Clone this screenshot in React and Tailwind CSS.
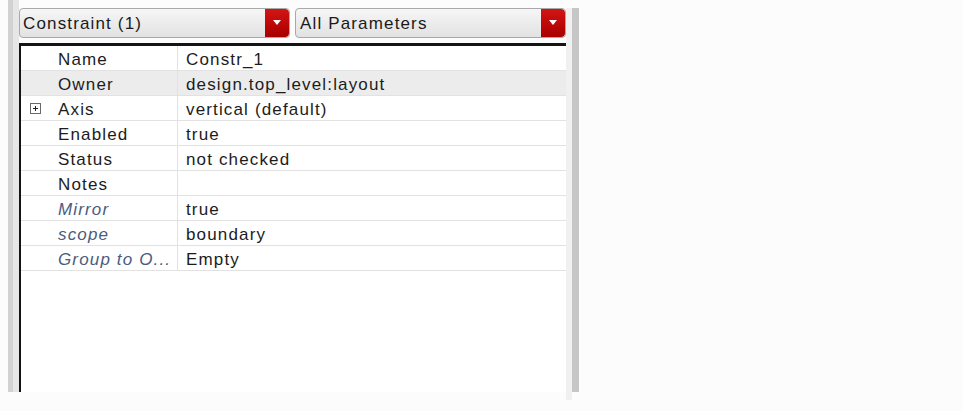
import React from "react";

const rows = [
  { name: "Name", value: "Constr_1" },
  { name: "Owner", value: "design.top_level:layout", shaded: true },
  { name: "Axis", value: "vertical (default)", expand: true },
  { name: "Enabled", value: "true" },
  { name: "Status", value: "not checked" },
  { name: "Notes", value: "" },
  { name: "Mirror", value: "true", italic: true },
  { name: "scope", value: "boundary", italic: true },
  { name: "Group to O...", value: "Empty", italic: true },
];

function Dropdown({ label, pad }) {
  return (
    <div className="flex-1 h-[30px] flex rounded-[4px] border border-[#a8a8a8] bg-gradient-to-b from-[#f6f6f6] to-[#e2e2e2] overflow-hidden">
      <div className={`flex-1 flex items-center pt-[1px] ${pad} text-[#1a1a1a]`}>{label}</div>
      <div className="w-[24px] h-full bg-gradient-to-b from-[#d41414] to-[#a80000] flex items-center justify-center rounded-r-[4px]">
        <svg width="8" height="5" viewBox="0 0 8 5" className="-mt-[2px]">
          <polygon points="0,0 8,0 4,5" fill="#ffffff" />
        </svg>
      </div>
    </div>
  );
}

function PlusBox() {
  return (
    <svg width="11" height="11" viewBox="0 0 11 11">
      <rect x="0.5" y="0.5" width="10" height="10" fill="#ffffff" stroke="#6a6a6a" />
      <line x1="3" y1="5.5" x2="8" y2="5.5" stroke="#222" />
      <line x1="5.5" y1="3" x2="5.5" y2="8" stroke="#222" />
    </svg>
  );
}

export default function App() {
  return (
    <div className="w-[963px] h-[411px] bg-[#fcfcfc] text-[17px] tracking-[1.15px] leading-none font-['Liberation_Sans',Arial,sans-serif]">
      <div className="flex h-[392px] pl-[8px] w-[579px]">
        <div className="w-[5px] h-full bg-[#d2d2d2]" />
        <div className="w-[6px] h-full bg-[#e6e6e6]" />
        <div className="flex-1 flex flex-col pt-[8px]">
          <div className="flex gap-[5px] h-[30px]">
            <Dropdown label="Constraint (1)" pad="pl-[3px]" />
            <Dropdown label="All Parameters" pad="pl-[4px]" />
          </div>
          <div className="mt-[5px] flex-1 bg-white border-t-[3px] border-l-[2px] border-[#141414] flex flex-col">
            {rows.map((r) => (
              <div
                key={r.name}
                className={`flex h-[25px] pt-[3px] border-b border-[#e2e2e2] ${r.shaded ? "bg-[#ececec]" : "bg-white"}`}
              >
                <div className="w-[29px] flex items-center pl-[9px] -mt-[2px]">
                  {r.expand ? <PlusBox /> : null}
                </div>
                <div
                  className={`w-[128px] flex items-center pl-[8px] -mt-[3px] pt-[3px] border-r border-[#e2e2e2] whitespace-nowrap overflow-hidden ${
                    r.italic ? "italic text-[#4a5c80]" : "text-[#1c1c1c]"
                  }`}
                >
                  {r.name}
                </div>
                <div className="flex-1 flex items-center pl-[8px] text-[#1c1c1c] whitespace-nowrap">
                  {r.value}
                </div>
              </div>
            ))}
          </div>
        </div>
        <div className="w-[6px] h-full mt-[8px] bg-[#f0f0f0]" />
        <div className="w-[7px] h-[384px] mt-[8px] bg-[#c6c6c6]" />
      </div>
    </div>
  );
}
